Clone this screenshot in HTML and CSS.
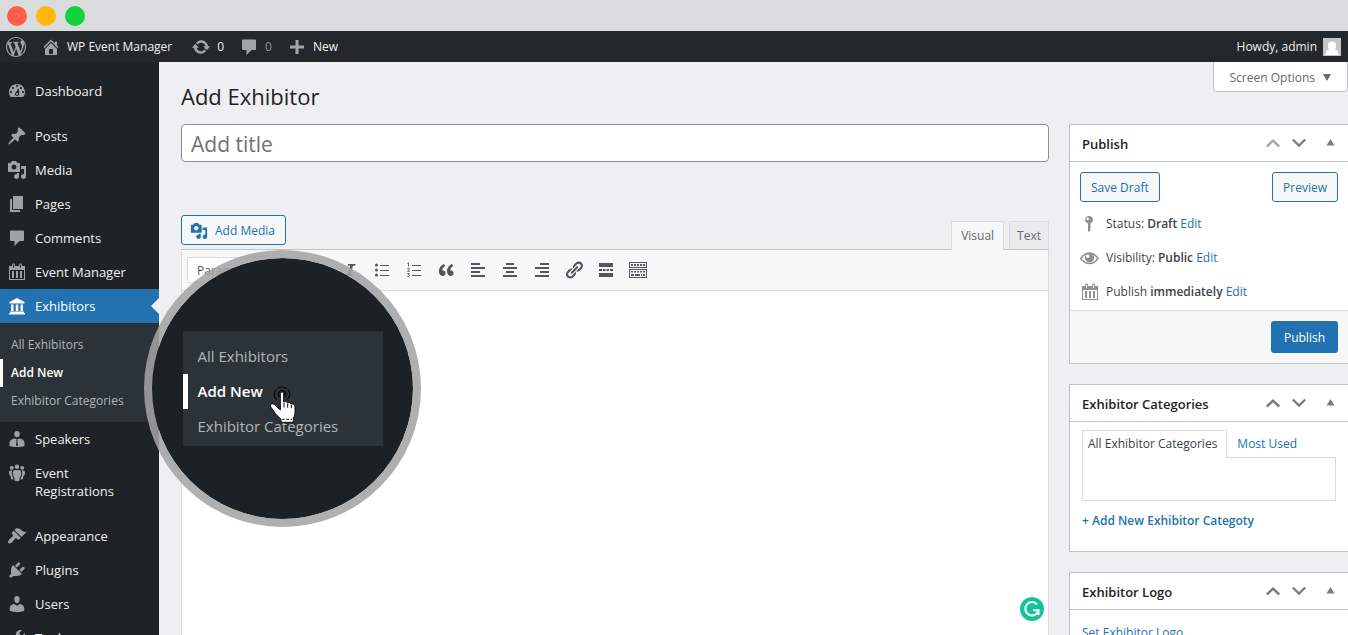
FILE: index.html
```html
<!DOCTYPE html>
<html lang="en">
<head>
<meta charset="utf-8">
<meta name="viewport" content="width=device-width, initial-scale=1">
<title>Add Exhibitor</title>
<link rel="stylesheet" href="styles.css">
</head>
<body>
<svg class="sprite" aria-hidden="true">
  <symbol id="wordpress" viewBox="0 0 20 20"><path d="M20 10c0-5.51-4.49-10-10-10C4.48 0 0 4.49 0 10c0 5.52 4.48 10 10 10 5.51 0 10-4.48 10-10zM7.78 15.37L4.37 6.22c.55-.02 1.17-.08 1.17-.08.5-.06.44-1.13-.06-1.11 0 0-1.45.11-2.37.11-.18 0-.37 0-.58-.01C4.12 2.69 6.87 1.11 10 1.11c2.33 0 4.45.87 6.05 2.34-.68-.11-1.65.39-1.65 1.58 0 .74.45 1.36.9 2.1.35.61.55 1.36.55 2.46 0 1.49-1.4 5-1.4 5l-3.03-8.37c.54-.02.82-.17.82-.17.5-.05.44-1.25-.06-1.22 0 0-1.44.12-2.38.12-.87 0-2.33-.12-2.33-.12-.5-.03-.56 1.2-.06 1.22l.92.08 1.26 3.41zM17.41 10c.24-.64.74-1.87.43-4.25.7 1.29 1.05 2.71 1.05 4.25 0 3.29-1.73 6.24-4.4 7.78.97-2.59 1.94-5.2 2.92-7.78zM6.1 18.09C3.12 16.65 1.11 13.53 1.11 10c0-1.3.23-2.48.72-3.59C3.25 10.3 4.67 14.2 6.1 18.09zm4.03-6.63l2.58 6.98c-.86.29-1.76.45-2.71.45-.79 0-1.57-.11-2.29-.33.81-2.38 1.62-4.74 2.42-7.1z"/></symbol>
  <symbol id="home" viewBox="0 0 20 20"><path d="M16 8.5l1.53 1.53-1.06 1.06L10 4.6l-6.47 6.49-1.06-1.06L10 2.5l4 4v-2h2v4zm-6-2.46l6 5.99V18H4v-5.97zM12 17v-5H8v5h4z"/></symbol>
  <symbol id="update" viewBox="0 0 20 20"><path d="M10.2 3.28c3.53 0 6.43 2.61 6.92 6h2.08l-3.5 4-3.5-4h2.32c-.45-1.97-2.21-3.45-4.32-3.45-1.45 0-2.73.71-3.54 1.78L4.95 5.66C6.23 4.2 8.11 3.28 10.2 3.28zm-.4 13.44c-3.52 0-6.43-2.61-6.92-6H.8l3.5-4c1.17 1.33 2.33 2.67 3.5 4H5.48c.45 1.97 2.21 3.45 4.32 3.45 1.45 0 2.73-.71 3.54-1.78l1.71 1.95c-1.28 1.46-3.15 2.38-5.25 2.38z"/></symbol>
  <symbol id="comments" viewBox="0 0 20 20"><path d="M4 2.500h12c.6 0 1 .4 1 1v8.500c0 .6-.4 1-1 1h-3.500L7.500 18v-5H4c-.6 0-1-.4-1-1V3.500c0-.6.4-1 1-1z"/></symbol>
  <symbol id="plus" viewBox="0 0 20 20"><path d="M17 8.500v3h-5.500V17h-3v-5.500H3v-3h5.500V3h3v5.500z"/></symbol>
  <symbol id="dashboard" viewBox="0 0 20 20"><path fill-rule="evenodd" d="M3.760 16h12.480c1.100-1.370 1.760-3.110 1.760-5 0-4.420-3.580-8-8-8s-8 3.580-8 8c0 1.890.66 3.630 1.760 5zM10 4c.55 0 1 .45 1 1s-.45 1-1 1-1-.45-1-1 .45-1 1-1zM6 6c.55 0 1 .45 1 1s-.45 1-1 1-1-.45-1-1 .45-1 1-1zm8 0c.55 0 1 .45 1 1s-.45 1-1 1-1-.45-1-1 .45-1 1-1zm-5.370 5.550L12 7v6c0 1.100-.9 2-2 2s-2-.9-2-2c0-.57.24-1.080.63-1.450zM4 10c.55 0 1 .45 1 1s-.45 1-1 1-1-.45-1-1 .45-1 1-1zm12 0c.55 0 1 .45 1 1s-.45 1-1 1-1-.45-1-1 .45-1 1-1zm-5 3c0-.55-.45-1-1-1s-1 .45-1 1 .45 1 1 1 1-.45 1-1z"/></symbol>
  <symbol id="pin" viewBox="0 0 20 20"><path d="M10.440 3.020l1.820-1.820 6.360 6.350-1.830 1.820c-1.050-.68-2.480-.57-3.410.36l-.75.75c-.92.93-1.040 2.350-.35 3.410l-1.830 1.820-2.410-2.410-2.800 2.790c-.42.42-3.380 2.710-3.800 2.290s1.860-3.390 2.280-3.810l2.790-2.790L4.100 9.360l1.830-1.820c1.050.69 2.480.57 3.400-.36l.75-.75c.93-.92 1.050-2.350.36-3.410z"/></symbol>
  <symbol id="media" viewBox="0 0 20 20"><path fill-rule="evenodd" d="M13 11V4c0-.55-.45-1-1-1h-1.670L9 1H5L3.670 3H2c-.55 0-1 .45-1 1v7c0 .55.45 1 1 1h10c.55 0 1-.45 1-1zM7 4.500c1.380 0 2.500 1.120 2.500 2.500S8.380 9.500 7 9.500 4.500 8.380 4.500 7 5.620 4.500 7 4.500zM14 6h5v10.500c0 1.380-1.120 2.500-2.500 2.500S14 17.880 14 16.500s1.120-2.500 2.500-2.500c.17 0 .34.020.5.050V9h-3V6zm-4 8.050V13h2v3.500c0 1.380-1.120 2.500-2.500 2.500S7 17.880 7 16.500 8.120 14 9.500 14c.17 0 .34.020.5.050z"/></symbol>
  <symbol id="pages" viewBox="0 0 20 20"><path d="M6 15V2h10v13H6zm-1 1h8v2H3V5h2v11z"/></symbol>
  <symbol id="calendar" viewBox="0 0 20 20"><path fill-rule="evenodd" d="M15 4h3v14H2V4h3V3c0-.83.67-1.500 1.500-1.500S8 2.170 8 3v1h4V3c0-.83.67-1.500 1.500-1.500S15 2.170 15 3v1zM6 3v2.500c0 .28.22.5.5.5s.5-.22.5-.5V3c0-.28-.22-.5-.5-.5S6 2.720 6 3zm7 0v2.500c0 .28.22.5.5.5s.5-.22.5-.5V3c0-.28-.22-.5-.5-.5s-.5.22-.5.5zm4 14V8H3v9h14zM7 16V9H5v7h2zm4 0V9H9v7h2zm4 0V9h-2v7h2z"/></symbol>
  <symbol id="bank" viewBox="0 0 20 20"><path d="M10 2l7.500 4v1.500h-15V6zM4 8.500h2.500V15H4zm4.750 0h2.500V15h-2.500zm4.750 0H16V15h-2.500zM3 15.500h14V17H3zM2 17h16v1.500H2z"/></symbol>
  <symbol id="speaker" viewBox="0 0 20 20"><path fill-rule="evenodd" d="M10 8.500C8 8.500 7.200 6.500 7.200 4.800S8.300 2 10 2s2.800 1.100 2.800 2.800S12 8.500 10 8.500zM6.500 9.800L8 9.500l2 1.300 2-1.300 1.500.3c2.300.4 4 2 4 4.200v3c-2 .7-4.500 1-7.500 1s-5.500-.3-7.500-1v-3c0-2.200 1.700-3.800 4-4.200zM9.200 11.500l.4 1-.6 3.500 1 1.200 1-1.200-.6-3.500.4-1-.8-.4z"/></symbol>
  <symbol id="groups" viewBox="0 0 20 20"><circle cx="10" cy="3.800" r="2.300"/><circle cx="4.800" cy="4.800" r="1.900"/><circle cx="15.200" cy="4.800" r="1.900"/><path d="M7.500 7h5c1.300.6 1.700 1.500 1.700 3 0 2-.5 4-1.500 4.500l-.4 3.200c-1.400.6-3.200.6-4.600 0l-.4-3.200c-1-.5-1.500-2.500-1.500-4.500 0-1.500.4-2.400 1.700-3zM3.300 7.500h2c-.7 1-.8 4.500.8 7.200l.3 1.800c-1 0-1.700-.2-2.300-.6l-.4-2.700C2.500 12.500 2 11 2 9.700c0-1.200.4-1.900 1.300-2.200zM16.700 7.500h-2c.7 1 .8 4.500-.8 7.200l-.3 1.800c1 0 1.700-.2 2.300-.6l.4-2.700c1.200-.7 1.700-2.200 1.700-3.500 0-1.200-.4-1.900-1.300-2.200z"/></symbol>
  <symbol id="appearance" viewBox="0 0 20 20"><path d="M14.480 11.060L7.410 3.990l1.500-1.500c.5-.56 2.300-.47 3.510.32 1.210.8 1.430 1.280 2.910 2.100 1.180.64 2.450 1.260 4.450.85zm-.71.71L6.700 4.700 4.930 6.470c-.39.39-.39 1.020 0 1.410l1.060 1.060c.39.39.39 1.030 0 1.420-.6.6-1.430 1.110-2.210 1.690-.35.26-.7.53-1.010.84C1.430 14.230.4 16.080 1.400 17.070c.99 1 2.840-.03 4.180-1.360.31-.31.58-.66.85-1.020.57-.78 1.080-1.610 1.690-2.210.39-.39 1.020-.39 1.410 0l1.060 1.060c.39.39 1.020.39 1.410 0z"/></symbol>
  <symbol id="plugins" viewBox="0 0 20 20"><path d="M13.110 4.360L9.870 7.600 8 5.730l3.240-3.240c.35-.34 1.050-.2 1.560.32.52.51.66 1.210.31 1.550zm-8 1.770l.91-1.120 9.010 9.010-1.190.84c-.71.71-2.630 1.160-3.820 1.160H6.140L4.900 17.260c-.59.59-1.540.59-2.120 0-.59-.58-.59-1.530 0-2.120l1.240-1.240v-3.880c0-1.130.4-3.190 1.090-3.890zm7.260 3.970l3.240-3.240c.34-.35 1.040-.21 1.550.31.52.51.66 1.210.31 1.550l-3.240 3.250z"/></symbol>
  <symbol id="users" viewBox="0 0 20 20"><path d="M10 9.250c-2.270 0-2.730-3.440-2.730-3.440C7 4.020 7.820 2 9.970 2c2.160 0 2.980 2.020 2.710 3.810 0 0-.41 3.440-2.680 3.440zm0 2.570L12.720 10c2.390 0 4.520 2.330 4.520 4.530v2.490s-3.650 1.130-7.240 1.130c-3.650 0-7.240-1.130-7.240-1.130v-2.490c0-2.250 1.940-4.480 4.470-4.480z"/></symbol>
  <symbol id="tools" viewBox="0 0 20 20"><path d="M16.680 9.770c-1.340 1.340-3.300 1.670-4.950.99l-5.410 6.520c-.99.99-2.590.99-3.580 0s-.99-2.590 0-3.570l6.520-5.420c-.68-1.650-.35-3.610.99-4.950 1.280-1.280 3.120-1.620 4.720-1.060l-2.890 2.890 2.820 2.820 2.860-2.870c.53 1.580.18 3.390-1.080 4.650z"/></symbol>
  <symbol id="bold" viewBox="0 0 20 20"><path fill-rule="evenodd" d="M6 4h5c2.500 0 4 1 4 3 0 1.500-.8 2.300-2 2.700 1.500.3 2.500 1.300 2.500 3 0 2.300-1.700 3.300-4.500 3.300H6zm3 2v3h1.500c1 0 1.500-.5 1.500-1.500S11.500 6 10.500 6zm0 5v3h1.700c1.100 0 1.700-.5 1.700-1.500s-.6-1.500-1.700-1.500z"/></symbol>
  <symbol id="italic" viewBox="0 0 20 20"><path d="M8 4h7.500l-.3 1.800h-2.300L10.800 14h2.200l-.4 2H5.500l.4-2h2.200l2.100-8.200H7.700z"/></symbol>
  <symbol id="bullets" viewBox="0 0 20 20"><circle cx="4.500" cy="5" r="1.500"/><circle cx="4.500" cy="10" r="1.500"/><circle cx="4.500" cy="15" r="1.500"/><path d="M8 5h9v1H8zm0 5h9v1H8zm0 5h9v1H8z"/></symbol>
  <symbol id="numbers" viewBox="0 0 20 20"><path d="M8 5h9v1H8zm0 5h9v1H8zm0 5h9v1H8z"/><path fill="none" stroke="currentColor" stroke-width=".9" d="M3.500 3.500l1-.7V6.500M3.300 8.600q2-1 2 .3 0 .8-1.800 2.400h2.200M3.400 13.500h2l-1 1.200q1.200.1 1 1.200-.3 1-2 .6"/></symbol>
  <symbol id="quote" viewBox="0 0 20 20"><path d="M9.490 13.220c0-.74-.2-1.380-.61-1.900-.62-.78-1.830-.88-2.530-.72-.29-1.650 1.110-3.750 2.920-4.650L7.880 4c-2.730 1.300-5.420 4.280-4.960 8.050C3.210 14.430 4.590 16 6.540 16c.85 0 1.560-.25 2.120-.75s.83-1.180.83-2.030zm8.050 0c0-.74-.2-1.380-.61-1.900-.63-.78-1.830-.88-2.530-.72-.29-1.650 1.110-3.750 2.920-4.650L15.930 4c-2.730 1.300-5.410 4.280-4.950 8.050.29 2.380 1.660 3.950 3.610 3.950.85 0 1.560-.25 2.120-.75s.83-1.180.83-2.030z"/></symbol>
  <symbol id="left" viewBox="0 0 20 20"><path d="M3 3h9v2H3zm0 4h14v2H3zm0 4h9v2H3zm0 4h14v2H3z"/></symbol>
  <symbol id="center" viewBox="0 0 20 20"><path d="M6 3h8v2H6zM3 7h14v2H3zm3 4h8v2H6zM3 15h14v2H3z"/></symbol>
  <symbol id="right" viewBox="0 0 20 20"><path d="M8 3h9v2H8zM3 7h14v2H3zm5 4h9v2H8zm-5 4h14v2H3z"/></symbol>
  <symbol id="link" viewBox="0 0 20 20"><path d="M17.740 2.760c1.680 1.690 1.680 4.410 0 6.100l-1.530 1.520c-1.120 1.120-2.700 1.470-4.140 1.090l2.620-2.610.76-.77.76-.76c.84-.84.84-2.200 0-3.040-.84-.85-2.200-.85-3.040 0l-.77.76-3.380 3.380c-.37-1.440-.02-3.020 1.100-4.140l1.520-1.530c1.690-1.680 4.420-1.680 6.100 0zM8.590 13.430l5.340-5.340c.42-.42.42-1.100 0-1.520-.44-.43-1.130-.39-1.530 0l-5.330 5.340c-.42.42-.42 1.100 0 1.520.44.43 1.130.39 1.520 0zm-.76 2.290l4.140-4.150c.38 1.440.03 3.020-1.090 4.140l-1.520 1.530c-1.690 1.680-4.410 1.680-6.100 0-1.680-1.680-1.680-4.420 0-6.100l1.530-1.520c1.120-1.120 2.700-1.470 4.140-1.100l-4.140 4.150c-.85.84-.85 2.200 0 3.050.84.84 2.200.84 3.040 0z"/></symbol>
  <symbol id="more" viewBox="0 0 20 20"><path d="M3 3h14v4H3zm0 6h3v2H3zm4 0h2.500v2H7zm3.500 0H13v2h-2.500zM14 9h3v2h-3zM3 13h14v4H3z"/></symbol>
  <symbol id="keyboard" viewBox="0 0 20 20"><path fill-rule="evenodd" d="M1 2h18v6H1zm1 1v4h16V3zM1 9h18v9H1zm1 1v7h16v-7z"/><path d="M3 4h2v2H3zm3 0h2v2H6zm3 0h2v2H9zm3 0h2v2h-2zm3 0h2v2h-2zM3 11h2v1.500H3zm3 0h2v1.500H6zm3 0h2v1.500H9zm3 0h2v1.500h-2zm3 0h2v1.500h-2zM3 14h3v2H3zm4 0h5v2H7zm6 0h1v2h-1zm2 0h2v2h-2z"/></symbol>
  <symbol id="post-status" viewBox="0 0 20 20"><path fill-rule="evenodd" d="M9 2c2.400 0 4 1.600 4 3.800 0 1.700-1 3.100-2.500 3.600V16L9 18l-1-1V9.400C6.200 9 5 7.500 5 5.800 5 3.600 6.600 2 9 2zM7.600 3.600a1.300 1.300 0 100 2.600 1.300 1.300 0 000-2.600z"/></symbol>
  <symbol id="eye" viewBox="0 0 20 20"><path fill="none" stroke="currentColor" stroke-width="1.400" d="M.7 10.500Q4.500 5 9.500 5t8.500 5.500Q14.500 15.500 9.500 15.500T.7 10.500z"/><path fill-rule="evenodd" d="M9.500 5a4.700 4.700 0 110 9.400A4.700 4.700 0 019.500 5zM7.800 6.600a1.700 1.700 0 100 3.400 1.700 1.700 0 000-3.400z"/></symbol>
  <symbol id="up" viewBox="0 0 20 20"><path fill="none" stroke="currentColor" stroke-width="2.400" d="M3.800 13.500L10 7.700l6.200 5.800"/></symbol>
  <symbol id="down" viewBox="0 0 20 20"><path fill="none" stroke="currentColor" stroke-width="2.400" d="M3.800 6.500l6.200 6 6.200-6"/></symbol>
  <symbol id="toggle" viewBox="0 0 20 20"><path d="M9.500 6l4 6.500h-8z"/></symbol>
</svg>

<div class="app">
  <div class="window-bar">
    <span class="dot dot-close"></span><span class="dot dot-min"></span><span class="dot dot-max"></span>
  </div>

  <header class="admin-bar">
    <a class="bar-item" href="#" aria-label="WordPress"><svg class="icon"><use href="#wordpress"/></svg></a>
    <a class="bar-item bar-site" href="#"><svg class="icon"><use href="#home"/></svg>WP Event Manager</a>
    <a class="bar-item" href="#"><svg class="icon"><use href="#update"/></svg>0</a>
    <a class="bar-item bar-muted" href="#"><svg class="icon"><use href="#comments"/></svg>0</a>
    <a class="bar-item" href="#"><svg class="icon"><use href="#plus"/></svg>New</a>
    <a class="bar-item bar-user" href="#">Howdy, admin
      <svg class="avatar" viewBox="0 0 18 18"><path fill="#c6c6c6" d="M0 0h18v18H0z"/><path fill="#fff" d="M9 3.500c2.600 0 4.200 1.600 4.200 4 0 1.700-.7 3-1.600 3.700 2.600.6 3.800 2.200 4 5.800H2.400c.2-3.600 1.400-5.200 4-5.800-.9-.7-1.600-2-1.600-3.700 0-2.400 1.600-4 4.200-4z"/></svg>
    </a>
  </header>

  <div class="body">
    <nav class="menu">
      <a class="menu-item" href="#"><svg class="icon"><use href="#dashboard"/></svg>Dashboard</a>
      <a class="menu-item section" href="#"><svg class="icon"><use href="#pin"/></svg>Posts</a>
      <a class="menu-item" href="#"><svg class="icon"><use href="#media"/></svg>Media</a>
      <a class="menu-item" href="#"><svg class="icon"><use href="#pages"/></svg>Pages</a>
      <a class="menu-item" href="#"><svg class="icon"><use href="#comments"/></svg>Comments</a>
      <a class="menu-item" href="#"><svg class="icon"><use href="#calendar"/></svg>Event Manager</a>
      <a class="menu-item active" href="#"><svg class="icon"><use href="#bank"/></svg>Exhibitors</a>
      <div class="submenu">
        <a href="#">All Exhibitors</a>
        <a class="current" href="#">Add New</a>
        <a href="#">Exhibitor Categories</a>
      </div>
      <a class="menu-item" href="#"><svg class="icon"><use href="#speaker"/></svg>Speakers</a>
      <a class="menu-item" href="#"><svg class="icon"><use href="#groups"/></svg>Event Registrations</a>
      <a class="menu-item section" href="#"><svg class="icon"><use href="#appearance"/></svg>Appearance</a>
      <a class="menu-item" href="#"><svg class="icon"><use href="#plugins"/></svg>Plugins</a>
      <a class="menu-item" href="#"><svg class="icon"><use href="#users"/></svg>Users</a>
      <a class="menu-item" href="#"><svg class="icon"><use href="#tools"/></svg>Tools</a>
    </nav>

    <main class="content">
      <div class="page-head">
        <h1>Add Exhibitor</h1>
        <button class="screen-options" type="button">Screen Options <svg class="caret" viewBox="0 0 8 8"><path d="M0 0h8L4 7z"/></svg></button>
      </div>

      <div class="columns">
        <div class="primary">
          <input class="title-input" type="text" placeholder="Add title" aria-label="Add title">
          <div class="editor-tools">
            <button class="btn btn-media" type="button"><svg class="icon-s"><use href="#media"/></svg>Add Media</button>
            <div class="editor-tabs">
              <button class="editor-tab selected" type="button">Visual</button>
              <button class="editor-tab" type="button">Text</button>
            </div>
          </div>
          <div class="editor">
            <div class="toolbar">
              <select class="format" aria-label="Format"><option>Paragraph</option></select>
              <button class="tool" type="button" aria-label="Bold"><svg class="icon"><use href="#bold"/></svg></button>
              <button class="tool" type="button" aria-label="Italic"><svg class="icon"><use href="#italic"/></svg></button>
              <button class="tool" type="button" aria-label="Bulleted list"><svg class="icon"><use href="#bullets"/></svg></button>
              <button class="tool" type="button" aria-label="Numbered list"><svg class="icon"><use href="#numbers"/></svg></button>
              <button class="tool" type="button" aria-label="Blockquote"><svg class="icon"><use href="#quote"/></svg></button>
              <button class="tool" type="button" aria-label="Align left"><svg class="icon"><use href="#left"/></svg></button>
              <button class="tool" type="button" aria-label="Align center"><svg class="icon"><use href="#center"/></svg></button>
              <button class="tool" type="button" aria-label="Align right"><svg class="icon"><use href="#right"/></svg></button>
              <button class="tool" type="button" aria-label="Insert link"><svg class="icon"><use href="#link"/></svg></button>
              <button class="tool" type="button" aria-label="Read more tag"><svg class="icon"><use href="#more"/></svg></button>
              <button class="tool" type="button" aria-label="Toolbar toggle"><svg class="icon"><use href="#keyboard"/></svg></button>
            </div>
            <div class="canvas">
              <svg class="grammar" viewBox="0 0 24 24"><circle cx="12" cy="12" r="12" fill="#15c39a"/><path fill="none" stroke="#fff" stroke-width="2" d="M17 7.300A6.700 6.700 0 1018.300 14M13 13.300h5.500V18"/></svg>
            </div>
          </div>
        </div>

        <aside class="secondary">
          <section class="panel">
            <div class="panel-head"><h2>Publish</h2>
              <button class="order dim" type="button" aria-label="Move up"><svg class="icon"><use href="#up"/></svg></button>
              <button class="order" type="button" aria-label="Move down"><svg class="icon"><use href="#down"/></svg></button>
              <button class="order toggle" type="button" aria-label="Toggle panel"><svg class="icon"><use href="#toggle"/></svg></button>
            </div>
            <div class="publish-body">
              <div class="publish-actions">
                <button class="btn" type="button">Save Draft</button>
                <button class="btn" type="button">Preview</button>
              </div>
              <p class="status"><svg class="icon"><use href="#post-status"/></svg><span>Status: <b>Draft</b> <a href="#">Edit</a></span></p>
              <p class="status"><svg class="icon"><use href="#eye"/></svg><span>Visibility: <b>Public</b> <a href="#">Edit</a></span></p>
              <p class="status"><svg class="icon"><use href="#calendar"/></svg><span>Publish <b>immediately</b> <a href="#">Edit</a></span></p>
            </div>
            <div class="publish-foot"><button class="btn-primary" type="button">Publish</button></div>
          </section>

          <section class="panel">
            <div class="panel-head"><h2>Exhibitor Categories</h2>
              <button class="order" type="button" aria-label="Move up"><svg class="icon"><use href="#up"/></svg></button>
              <button class="order" type="button" aria-label="Move down"><svg class="icon"><use href="#down"/></svg></button>
              <button class="order toggle" type="button" aria-label="Toggle panel"><svg class="icon"><use href="#toggle"/></svg></button>
            </div>
            <div class="category-body">
              <div class="category-tabs">
                <a class="selected" href="#">All Exhibitor Categories</a>
                <a href="#">Most Used</a>
              </div>
              <div class="category-list"></div>
              <a class="add-category" href="#">+ Add New Exhibitor Categoty</a>
            </div>
          </section>

          <section class="panel">
            <div class="panel-head"><h2>Exhibitor Logo</h2>
              <button class="order" type="button" aria-label="Move up"><svg class="icon"><use href="#up"/></svg></button>
              <button class="order" type="button" aria-label="Move down"><svg class="icon"><use href="#down"/></svg></button>
              <button class="order toggle" type="button" aria-label="Toggle panel"><svg class="icon"><use href="#toggle"/></svg></button>
            </div>
            <div class="logo-body"><a href="#">Set Exhibitor Logo</a></div>
          </section>
        </aside>
      </div>
    </main>
  </div>

  <div class="lens">
    <div class="lens-menu">
      <a href="#">All Exhibitors</a>
      <a class="current" href="#">Add New</a>
      <a href="#">Exhibitor Categories</a>
    </div>
    <svg class="pointer" viewBox="40 30 90 120">
      <path fill="none" stroke="#0b0d0e" stroke-width="4" stroke-linecap="round" d="M70 64a11 11 0 1118 0M62 72a20 20 0 01-1-28M96 72a20 20 0 001-28M67 40q12-7 24 0"/>
      <path fill="#fff" stroke="#0b0d0e" stroke-width="3" stroke-linejoin="round" d="M74 55q5-10 10 0v26q7-6 12 3 6-4 10 3 7-3 12 5v22q0 9-5 15v13H76v-9L61 118 46 97q-5-9 3-11 7 0 12 7l13 12z"/>
      <path fill="none" stroke="#0b0d0e" stroke-width="3" d="M85 83v14M96 86v12M107 90v10M80 133h7m5 0h8m5 0h4"/>
    </svg>
  </div>
</div>
</body>
</html>
```
FILE: styles.css
```css
* { box-sizing: border-box; }

body {
  margin: 0;
  background: #efeff1;
  color: #3c434a;
  font: 12px/18px "Open Sans", "Noto Sans", sans-serif;
}

h1, h2, p { margin: 0; }
a { color: #2271b1; text-decoration: none; }
button, input, select { font: inherit; }
button { cursor: pointer; }
b { font-weight: 600; }

.sprite { display: none; }
.icon { width: 20px; height: 20px; flex: none; fill: currentColor; }
.icon-s { width: 18px; height: 18px; flex: none; fill: currentColor; }

.app {
  position: relative;
  display: flex;
  flex-direction: column;
  height: 100vh;
  overflow: hidden;
}

.window-bar {
  display: flex;
  flex: none;
  align-items: center;
  gap: 9px;
  height: 31px;
  padding-left: 7px;
  background: #dadbdd;
}
.dot { width: 20px; height: 20px; border-radius: 50%; }
.dot-close { background: #ff5f4a; }
.dot-min { background: #ffb70f; }
.dot-max { background: #10d43c; }

.admin-bar {
  display: flex;
  flex: none;
  align-items: center;
  gap: 15px;
  height: 31px;
  padding: 1px 7px 0 6px;
  background: #23282c;
  font-weight: 500;
}
.bar-item { display: flex; align-items: center; gap: 6px; color: #f0f0f1; }
.bar-item .icon { color: #a0a5aa; }
.bar-site { margin-right: 4px; }
.bar-muted { color: #8c9196; }
.bar-user { margin-left: auto; }
.avatar { width: 18px; height: 18px; }

.body { display: flex; flex: 1; min-height: 0; }

.menu {
  flex: none;
  width: 159px;
  padding-top: 12px;
  background: #1d2327;
  overflow: hidden;
  font-size: 13px;
}
.menu-item {
  position: relative;
  display: flex;
  gap: 8px;
  padding: 8px 20px 8px 7px;
  color: #f0f0f1;
}
.menu-item .icon { color: #9ca2a7; margin: -1px 0; }
.section { margin-top: 11px; }
.menu .active, .menu .active .icon { color: #fff; }
.active { background: #2271b1; }
.active::after {
  content: "";
  position: absolute;
  right: 0;
  top: 9px;
  border: 8px solid transparent;
  border-left: 0;
  border-right-color: #efeff1;
}
.submenu { padding: 8px 0 7px; background: #2c3338; font-size: 12px; }
.submenu a { display: block; padding: 5px 11px; color: #b0b5b9; }
.submenu .current { border-left: 3px solid #fff; padding-left: 8px; color: #fff; font-weight: 600; }

.content {
  display: flex;
  flex: 1;
  flex-direction: column;
  min-width: 0;
  padding-left: 22px;
}
.page-head {
  display: flex;
  flex: none;
  justify-content: space-between;
  align-items: flex-start;
  height: 62px;
}
h1 { padding-top: 19px; color: #1d2327; font-size: 22px; font-weight: 400; line-height: 30px; }
.screen-options {
  display: flex;
  align-items: center;
  gap: 8px;
  height: 30px;
  padding: 2px 16px 0;
  border: 1px solid #c3c4c7;
  border-top: 0;
  border-radius: 0 0 4px 4px;
  background: #fff;
  color: #646970;
}
.caret { width: 8px; height: 8px; fill: currentColor; }

.columns { display: flex; flex: 1; gap: 20px; min-height: 0; }
.primary { display: flex; flex: 1; flex-direction: column; min-width: 0; }
.title-input {
  flex: none;
  width: 100%;
  height: 38px;
  padding: 2px 9px 0;
  border: 1px solid #8c8f94;
  border-radius: 4px;
  background: #fff;
  font-size: 21px;
}
.title-input::placeholder { color: #6c7177; opacity: 1; }

.editor-tools {
  display: flex;
  flex: none;
  justify-content: space-between;
  align-items: flex-end;
  margin-top: 53px;
}
.btn {
  height: 30px;
  padding: 2px 10px 0;
  border: 1px solid #2271b1;
  border-radius: 3px;
  background: #f6f7f7;
  color: #2271b1;
}
.btn-media { display: flex; align-items: center; gap: 7px; margin-bottom: 4px; padding: 1px 10px 0 8px; }
.editor-tabs { display: flex; gap: 5px; }
.editor-tab {
  height: 28px;
  padding: 0 7px;
  border: 1px solid #dcdcde;
  border-bottom: 0;
  background: #ebebed;
  color: #646970;
}
.editor-tab.selected { margin-bottom: -1px; height: 29px; padding: 0 9px; background: #f6f7f7; z-index: 1; }

.editor {
  display: flex;
  flex: 1;
  flex-direction: column;
  min-height: 0;
  border: 1px solid #dcdcde;
  border-top-color: #c3c4c7;
  border-bottom: 0;
}
.toolbar {
  display: flex;
  flex: none;
  align-items: center;
  gap: 4px;
  height: 41px;
  padding-left: 5px;
  border-bottom: 1px solid #dcdcde;
  background: #f6f7f7;
}
.format { width: 113px; height: 26px; padding: 0 5px; border: 1px solid #dcdcde; background: #fff; color: #50575e; }
.tool, .order {
  display: flex;
  align-items: center;
  justify-content: center;
  width: 28px;
  height: 28px;
  padding: 0;
  border: 0;
  background: none;
  color: #50575e;
}
.canvas { display: flex; flex: 1; justify-content: flex-end; align-items: flex-end; padding: 0 4px 14px; background: #fff; }
.grammar { width: 24px; height: 24px; }

.secondary { display: flex; flex: none; flex-direction: column; gap: 20px; width: 279px; }
.panel { flex: none; border: 1px solid #c3c4c7; border-right: 0; background: #fff; }
.panel-head {
  display: flex;
  align-items: center;
  height: 37px;
  padding: 0 4px 0 12px;
  border-bottom: 1px solid #c3c4c7;
}
h2 { flex: 1; padding-top: 2px; color: #1d2327; font-size: 13px; font-weight: 600; }
.order { width: 26px; color: #787c82; }
.order.dim { color: #a7aaad; }
.toggle { margin-left: 6px; }

.publish-body { padding: 10px 10px 1px; }
.publish-actions { display: flex; justify-content: space-between; padding-bottom: 5px; }
.status { display: flex; align-items: center; gap: 6px; height: 34px; }
.status .icon { color: #8c8f94; }
.publish-foot {
  display: flex;
  justify-content: flex-end;
  padding: 10px;
  border-top: 1px solid #dcdcde;
  background: #f6f7f7;
}
.btn-primary {
  height: 32px;
  padding: 2px 13px 0;
  border: 0;
  border-radius: 3px;
  background: #2271b1;
  color: #fff;
  font-weight: 500;
}

.category-body { padding: 8px 12px 21px; }
.category-tabs { display: flex; }
.category-tabs a { height: 27px; padding: 4px 5px; border: 1px solid transparent; border-bottom: 0; }
.category-tabs .selected {
  z-index: 1;
  height: 28px;
  margin: 0 4px -1px 0;
  padding-right: 9px;
  border-color: #dcdcde;
  background: #fff;
  color: #3c434a;
}
.category-list { height: 44px; margin-bottom: 11px; border: 1px solid #dcdcde; }
.add-category { font-weight: 600; }
.logo-body { padding: 14px 12px; }

.lens {
  position: absolute;
  left: 144px;
  top: 250px;
  display: flex;
  align-items: center;
  justify-content: center;
  width: 277px;
  height: 277px;
  border: 8px solid rgba(163, 163, 163, .87);
  border-radius: 50%;
  background: #1c2125 padding-box;
}
.lens-menu { width: 200px; padding: 8px 0 2px; background: #2c3338; font-size: 15px; }
.lens-menu a { display: block; padding: 0 15px; color: #b0b5b9; line-height: 35px; }
.lens-menu .current { border-left: 5px solid #fff; padding-left: 10px; color: #fff; font-weight: 600; }
.pointer { position: absolute; left: 117px; top: 127px; width: 30px; height: 40px; }
```
